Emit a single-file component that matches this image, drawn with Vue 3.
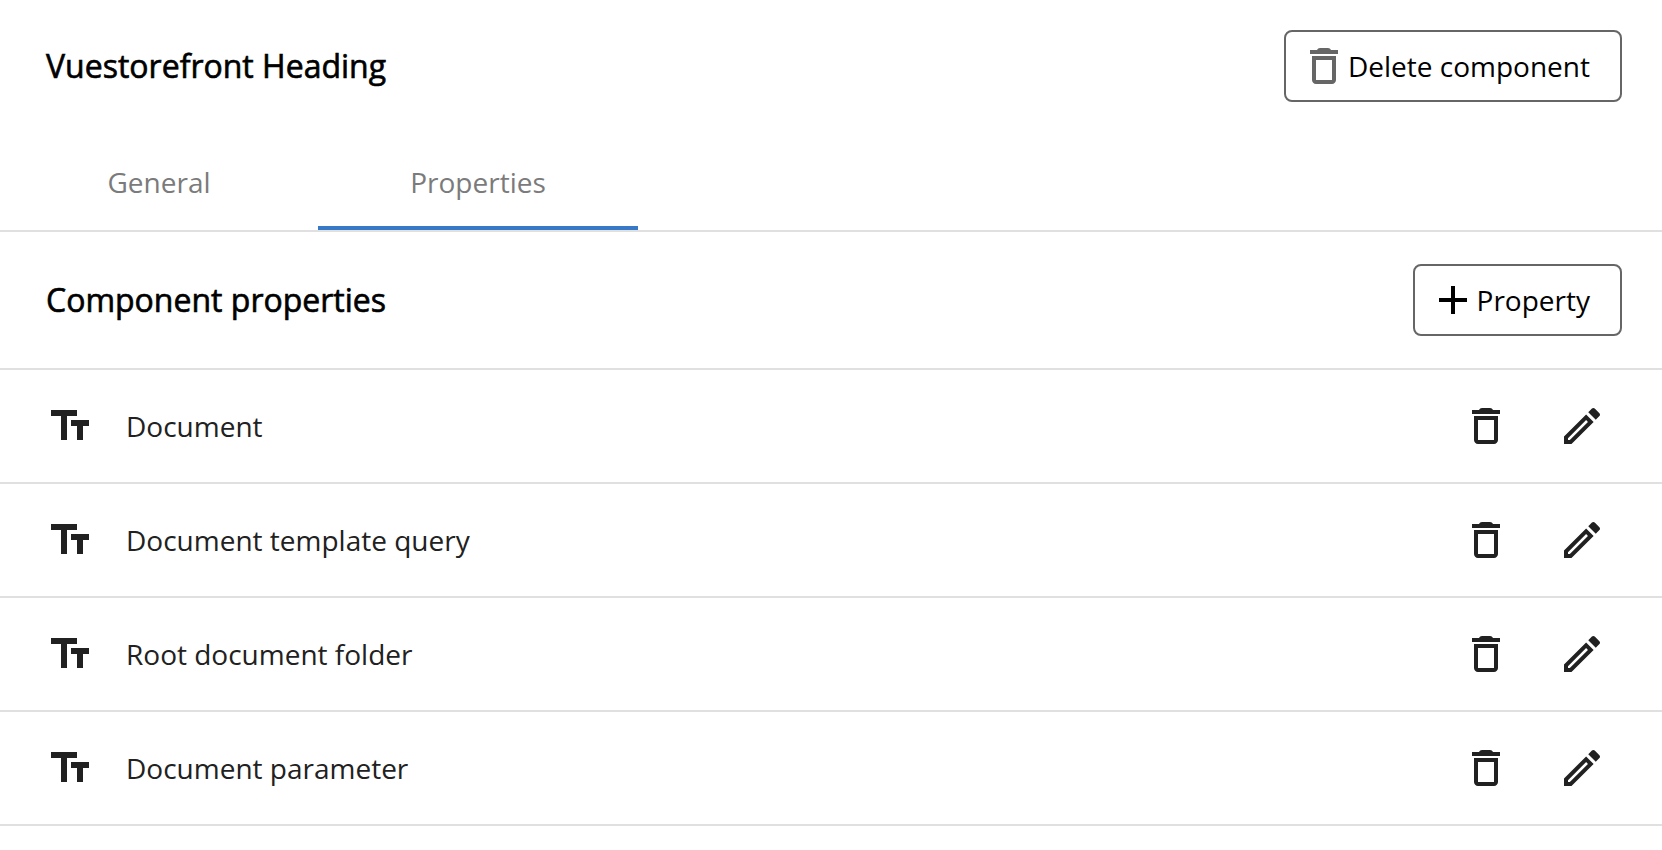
<script setup>
import { ref } from "vue";

const tabs = ["General", "Properties"];
const activeTab = ref("Properties");

const properties = ref([
  { id: 1, name: "Document" },
  { id: 2, name: "Document template query" },
  { id: 3, name: "Root document folder" },
  { id: 4, name: "Document parameter" },
]);

function removeProperty(id) {
  properties.value = properties.value.filter((item) => item.id !== id);
}
</script>

<template>
  <main class="component-editor">
    <header class="header">
      <h1 class="title">Vuestorefront Heading</h1>
      <button type="button" class="button">
        <svg class="icon icon-muted" viewBox="0 0 24 24" aria-hidden="true">
          <path
            d="M6 19c0 1.1.9 2 2 2h8c1.1 0 2-.9 2-2V7H6v12zM8 9h8v10H8V9zM15.5 4c-.3-.6-.8-1-1.5-1h-4c-.7 0-1.2.4-1.5 1H5v2h14V4h-3.5z"
          />
        </svg>
        Delete component
      </button>
    </header>

    <div class="tabs" role="tablist">
      <button
        v-for="tab in tabs"
        :key="tab"
        type="button"
        role="tab"
        class="tab"
        :class="{ active: tab === activeTab }"
        :aria-selected="tab === activeTab"
        @click="activeTab = tab"
      >
        {{ tab }}
      </button>
    </div>

    <section>
      <div class="section-header">
        <h2 class="title">Component properties</h2>
        <button type="button" class="button">
          <svg class="icon" viewBox="0 0 24 24" aria-hidden="true">
            <path d="M19 13h-6v6h-2v-6H5v-2h6V5h2v6h6v2z" />
          </svg>
          Property
        </button>
      </div>

      <ul class="list">
        <li v-for="item in properties" :key="item.id" class="item">
          <svg class="icon" viewBox="0 0 24 24" aria-hidden="true">
            <path
              d="M2.5 4v3h5v12h3V7h5V4h-13zm19 5h-9v3h3v7h3v-7h3V9z"
            />
          </svg>
          <span class="name">{{ item.name }}</span>
          <button
            type="button"
            class="icon-button"
            :aria-label="`Delete ${item.name}`"
            @click="removeProperty(item.id)"
          >
            <svg class="icon" viewBox="0 0 24 24" aria-hidden="true">
              <path
                d="M6 19c0 1.1.9 2 2 2h8c1.1 0 2-.9 2-2V7H6v12zM8 9h8v10H8V9zM15.5 4c-.3-.6-.8-1-1.5-1h-4c-.7 0-1.2.4-1.5 1H5v2h14V4h-3.5z"
              />
            </svg>
          </button>
          <button
            type="button"
            class="icon-button"
            :aria-label="`Edit ${item.name}`"
          >
            <svg class="icon" viewBox="0 0 24 24" aria-hidden="true">
              <path
                d="M14.06 9.02l.92.92L5.92 19H5v-.92l9.06-9.06M17.66 3c-.25 0-.51.1-.7.29l-1.83 1.83 3.75 3.75 1.83-1.83c.39-.39.39-1.02 0-1.41l-2.34-2.34c-.2-.2-.45-.29-.71-.29zm-3.6 3.19L3 17.25V21h3.75L17.81 9.94l-3.75-3.75z"
              />
            </svg>
          </button>
        </li>
      </ul>
    </section>
  </main>
</template>

<style>
body {
  background-color: #fff;
}
</style>

<style scoped>
.component-editor {
  font-family: "Open Sans", sans-serif;
  font-size: 28px;
  line-height: 40px;
  color: #000;
}

.header,
.section-header {
  display: flex;
  align-items: center;
  justify-content: space-between;
  padding: 30px 40px 30px 46px;
}

.section-header {
  padding-top: 32px;
  padding-bottom: 32px;
  border-bottom: 2px solid #e0e0e0;
}

.title {
  margin: 0;
  font-size: 32px;
  font-weight: 500;
  -webkit-text-stroke: 0.02em currentColor;
}

.button {
  display: flex;
  align-items: center;
  height: 72px;
  padding: 0 30px 0 14px;
  border: 2px solid #666;
  border-radius: 8px;
  background: none;
  color: inherit;
  font: inherit;
  cursor: pointer;
}

.icon {
  display: block;
  flex: none;
  width: 48px;
  height: 48px;
  fill: currentColor;
}

.icon-muted {
  color: #666;
}

.tabs {
  display: grid;
  grid-template-columns: 318px 320px;
  border-bottom: 2px solid #e0e0e0;
}

.tab {
  height: 98px;
  padding: 6px 0 0;
  border: 0;
  border-bottom: 4px solid transparent;
  background: none;
  color: #7b7b7b;
  font: inherit;
  cursor: pointer;
}

.tab.active {
  border-bottom-color: #3778c7;
}

.list {
  margin: 0;
  padding: 0;
  list-style: none;
  color: #212121;
}

.item {
  display: flex;
  align-items: center;
  padding: 8px 32px 8px 46px;
  border-bottom: 2px solid #e0e0e0;
}

.name {
  flex: 1;
  padding-left: 32px;
}

.icon-button {
  padding: 24px;
  border: 0;
  background: none;
  color: inherit;
  cursor: pointer;
}
</style>
